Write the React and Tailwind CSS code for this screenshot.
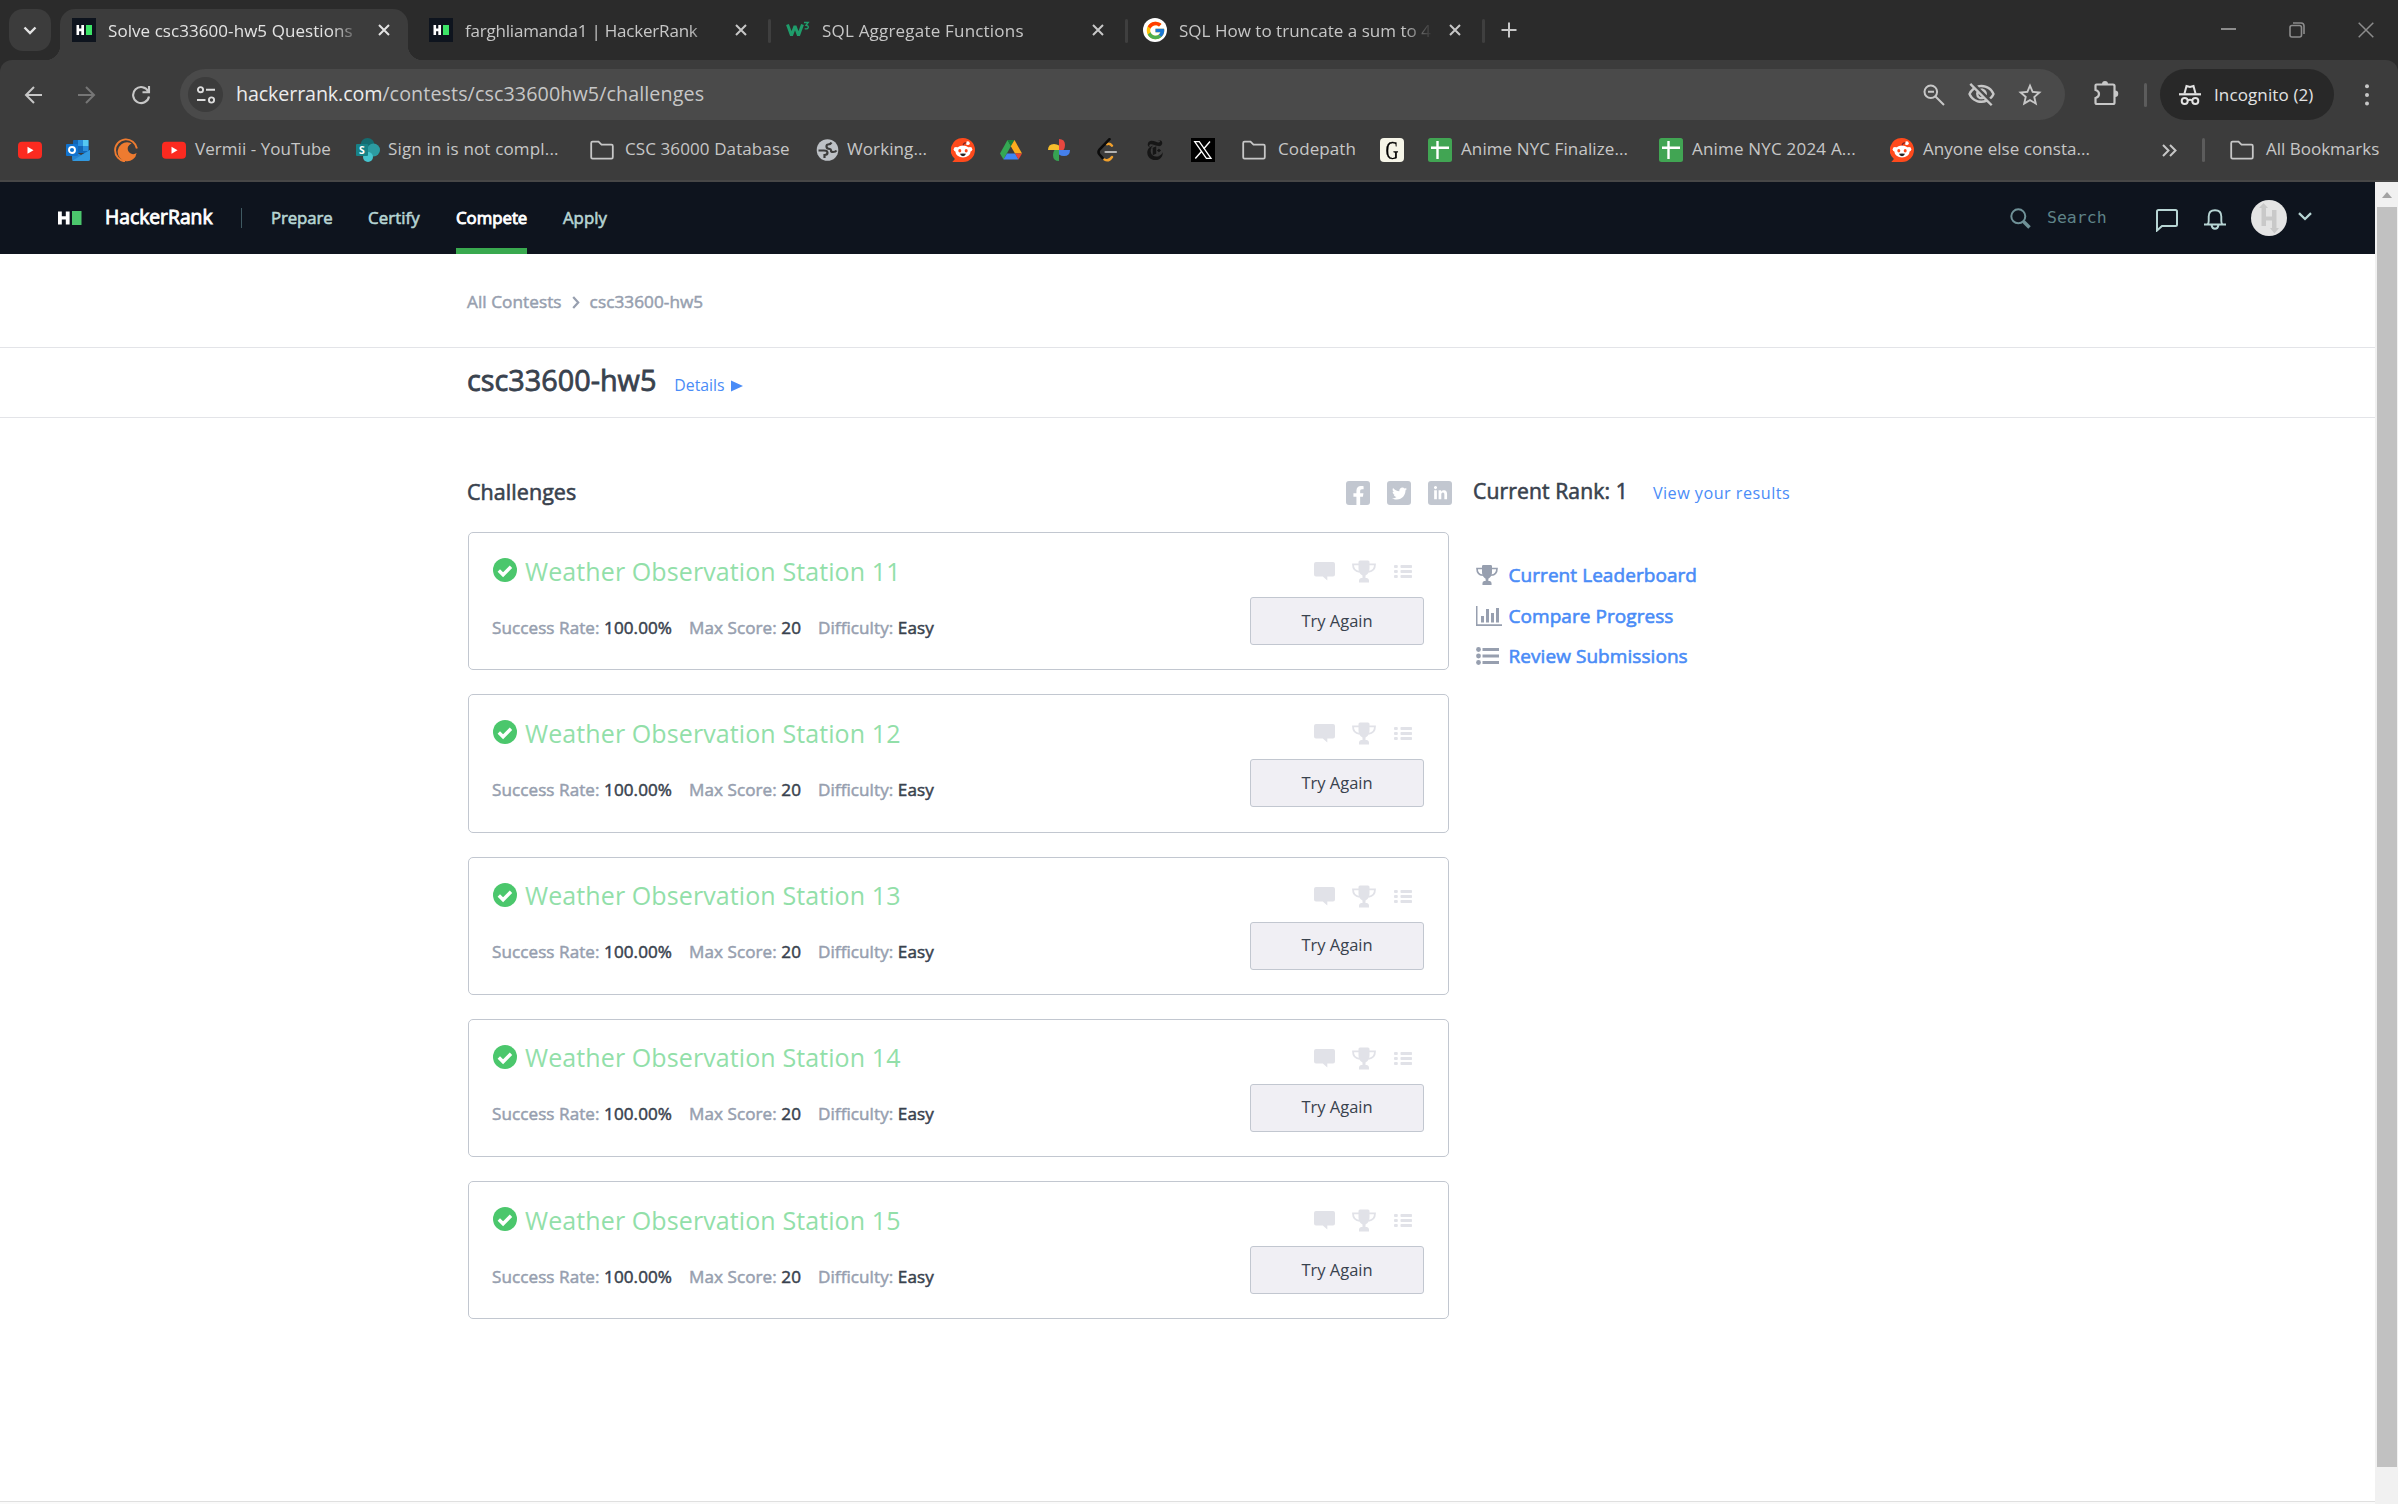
import { FcGoogle } from "react-icons/fc";
import { SiNewyorktimes } from "react-icons/si";
import { FaFacebookF, FaTwitter, FaLinkedinIn } from "react-icons/fa";
import { MdStarOutline, MdOutlineVisibilityOff } from "react-icons/md";

/* ---------- favicons and bookmark icons ---------- */

const HrFavicon = () => (
  <svg viewBox="0 0 24 24" className="size-6 shrink-0">
    <rect width="24" height="24" fill="#0e141e" />
    <path d="M4.500 7h2.600v3.600h2.200V7H12v10H9.300v-3.700H7.100V17H4.500z" fill="#fff" />
    <rect x="14" y="7" width="6" height="10" fill="#3ce467" />
  </svg>
);

const W3Favicon = () => (
  <svg viewBox="0 0 24 24" className="size-6 shrink-0">
    <path d="M1.500 6.500l4 11 3.500-9.500L12.500 17.500l4-11" fill="none" stroke="#1f9d6b" strokeWidth="3" strokeLinejoin="bevel" />
    <path d="M18 4.500h4.300l-2.300 2.800q2.600.2 2.300 2.200-.6 1.900-3.600 1.200" fill="none" stroke="#1f9d6b" strokeWidth="1.300" />
  </svg>
);

const GoogleFavicon = () => (
  <span className="flex size-6 shrink-0 items-center justify-center rounded-full bg-white">
    <FcGoogle size={21} />
  </span>
);

const Youtube = () => (
  <svg viewBox="0 0 24 24" className="size-6 shrink-0">
    <rect y="3.700" width="24" height="17" rx="4" fill="#fb2a20" />
    <path d="M9.500 8.700v7l6-3.500z" fill="#fff" />
  </svg>
);

const Outlook = () => (
  <svg viewBox="0 0 24 24" className="size-6 shrink-0">
    <rect x="7" y="2" width="15.500" height="13" rx="1" fill="#1266b5" />
    <rect x="12" y="2" width="5" height="6" fill="#2a8fdd" />
    <rect x="17" y="2" width="5.500" height="6" fill="#55c8f2" />
    <rect x="17" y="8" width="5.500" height="5" fill="#2a8fdd" />
    <path d="M6 12l9 5 9-5v9q0 2-2 2H8q-2 0-2-2z" fill="#2483cf" />
    <path d="M6 23l18-11v9q0 2-2 2z" fill="#3299e0" />
    <rect y="6" width="12" height="12" rx="1" fill="#1173cf" />
    <circle cx="6" cy="12" r="3" fill="none" stroke="#fff" strokeWidth="1.900" />
  </svg>
);

const Crunchyroll = () => (
  <svg viewBox="0 0 24 24" className="size-6 shrink-0">
    <path d="M22.900 10.500A11 11 0 1 0 11 23.300" fill="none" stroke="#ee7b30" strokeWidth="1.900" />
    <path d="M14.500 4.400A9.500 9.500 0 1 0 22.600 15a5.500 5.500 0 1 1-5-9.600 9 9 0 0 0-3.100-1z" fill="#ee7b30" />
  </svg>
);

const Sharepoint = () => (
  <svg viewBox="0 0 24 24" className="size-6 shrink-0">
    <circle cx="11.500" cy="7" r="7" fill="#156c70" />
    <circle cx="17.500" cy="12" r="6.500" fill="#2c9ba1" />
    <circle cx="12" cy="19" r="5" fill="#45c4ce" />
    <rect y="6" width="12" height="12" rx="1" fill="#178287" />
    <text x="6" y="15.800" textAnchor="middle" fontSize="10.500" fontWeight="700" fill="#fff" fontFamily="Open Sans, sans-serif">S</text>
  </svg>
);

const Folder = () => (
  <svg viewBox="0 0 24 24" className="size-6 shrink-0">
    <path d="M2.500 3.700h6l3 3h10q1.300 0 1.300 1.300v11.300q0 1.300-1.300 1.300h-19q-1.300 0-1.300-1.300V5q0-1.300 1.300-1.300z" fill="none" stroke="#c7c7c7" strokeWidth="1.800" />
  </svg>
);

const Globe = () => (
  <svg viewBox="0 0 24 24" className="size-6 shrink-0">
    <circle cx="11.500" cy="12" r="10.800" fill="#bdc1c6" />
    <path d="M2.500 12.500H8q3.500 0 3.500 2.300 0 2.200-3 2.200v3M15.500 4.500q-1 2-3.500 2-1.500 0-1.500 2 0 2.500 3.500 2.500 1 0 1 1.500 0 1.500 2 1.500 2.500 0 3.500-1.500" fill="none" stroke="#3c3c3c" strokeWidth="2.200" />
  </svg>
);

const Reddit = () => (
  <svg viewBox="0 0 24 24" className="size-6 shrink-0">
    <path d="M12 0a12 12 0 1 1 0 24H1.300l2.600-3A12 12 0 0 1 12 0z" fill="#ff4a1c" />
    <circle cx="16.800" cy="5.200" r="1.900" fill="#fff" />
    <path d="M12 8.500c0-3 1.500-4 3.500-3.500" fill="none" stroke="#842123" strokeWidth="1.200" />
    <circle cx="5" cy="11.300" r="2.300" fill="#fff" />
    <circle cx="19" cy="11.300" r="2.300" fill="#fff" />
    <ellipse cx="12" cy="13.500" rx="7.600" ry="6" fill="#fff" />
    <ellipse cx="8.800" cy="12.700" rx="1.500" ry="1.800" fill="#ff4a1c" />
    <ellipse cx="15.200" cy="12.700" rx="1.500" ry="1.800" fill="#ff4a1c" />
    <path d="M9 15.800q3-.6 6 0-.7 2.400-3 2.400t-3-2.400z" fill="#222" />
  </svg>
);

const Drive = () => (
  <svg viewBox="0 0 24 24" className="size-6 shrink-0">
    <path d="M8.500 2L1 15.500 4.500 21.500 12 8z" fill="#34a853" />
    <path d="M8.500 2h7L12 8.200z" fill="#188038" />
    <path d="M15.500 2L23 15.500h-7L11.800 8.200z" fill="#fbad1e" />
    <path d="M8 15.500h8.200l3.300 6h-15z" fill="#4285f4" />
    <path d="M16 15.500h7l-3.500 6z" fill="#ea4335" />
  </svg>
);

const Photos = () => (
  <svg viewBox="0 0 24 24" className="size-6 shrink-0">
    <path d="M12 1q6 0 6 6 0 3-1.500 5H12z" fill="#e8473f" />
    <path d="M1 12q0-6 6-6 3 0 5 1.500V12z" fill="#f6bd2c" />
    <path d="M12 12h11q0 6-6 6-3 0-5-1.500z" fill="#4580ec" />
    <path d="M12 12v11q-6 0-6-6 0-3 1.500-5z" fill="#37a352" />
  </svg>
);

const Leetcode = () => (
  <svg viewBox="0 0 24 24" className="size-6 shrink-0" fill="none" strokeLinecap="round">
    <path d="M12 6.200q2.500-1.500 5 1.500M9.500 21.500q4 2.500 7.500-2.500" stroke="#f0a02c" strokeWidth="2.400" />
    <path d="M14.500 1.200L4.500 11.500q-2 2.500 0 5l3 3.300" stroke="#0b0b0b" strokeWidth="2.600" />
    <path d="M10.500 14h10.500" stroke="#b3b3b3" strokeWidth="2.200" />
  </svg>
);

const Nyt = () => (
  <span className="flex size-6 shrink-0 items-center justify-center">
    <SiNewyorktimes size={20} color="#161616" />
  </span>
);

const XLogo = () => (
  <svg viewBox="0 0 24 24" className="size-6 shrink-0">
    <rect width="24" height="24" fill="#000" />
    <path d="M3.700 3.700h4.600l11.700 16.600h-4.600z" fill="none" stroke="#fff" strokeWidth="1.300" />
    <path d="M19 3.500l-6.200 7.200M10.700 13.200L4.300 20.500" stroke="#fff" strokeWidth="1.400" />
  </svg>
);

const GSerif = () => (
  <span className="flex size-6 shrink-0 items-center justify-center rounded-sm bg-[#f6f5e8] font-['Liberation_Serif',serif] text-[25px] leading-none text-black">
    <span className="scale-x-[0.72] [-webkit-text-stroke:0.3px]">G</span>
  </span>
);

const Sheets = () => (
  <svg viewBox="0 0 24 24" className="size-6 shrink-0">
    <rect width="24" height="24" rx="2.500" fill="#41a553" />
    <path d="M9.500 3v18M3 9.800h18" stroke="#fff" strokeWidth="2.400" />
  </svg>
);

/* ---------- browser chrome ---------- */

const Close = ({ color = "#c7c7c7" }) => (
  <svg viewBox="0 0 12 12" className="size-3 shrink-0">
    <path d="M1 1l10 10M11 1L1 11" stroke={color} strokeWidth="2" />
  </svg>
);

const tabs = [
  { icon: HrFavicon, title: "Solve csc33600-hw5 Questions", active: true, spacing: "tracking-[0.06px]" },
  { icon: HrFavicon, title: "farghliamanda1 | HackerRank", spacing: "tracking-[-0.2px]" },
  { icon: W3Favicon, title: "SQL Aggregate Functions", spacing: "tracking-[0.2px]" },
  { icon: GoogleFavicon, title: "SQL How to truncate a sum to 4", spacing: "tracking-[0.02px]" },
];

function Tab({ icon: Icon, title, active, spacing }) {
  return (
    <div className="flex h-[60px] w-[357px] shrink-0 pt-[9px]">
      <div className={active ? "relative flex h-[51px] w-[348px] rounded-t-[15px] bg-[#3c3c3c]" : "relative flex h-[51px] w-[348px]"}>
        {active && (
          <>
            <span className="absolute -left-[15px] bottom-0 size-[15px] bg-[radial-gradient(circle_at_0_0,transparent_15px,#3c3c3c_15.500px)]" />
            <span className="absolute -right-[15px] bottom-0 size-[15px] bg-[radial-gradient(circle_at_100%_0,transparent_15px,#3c3c3c_15.500px)]" />
          </>
        )}
        <div className="flex h-[42px] items-center pl-3">
          <Icon />
          <span
            className={`ml-3 w-[254px] whitespace-nowrap pt-0.5 text-[17px] leading-6 [mask-image:linear-gradient(to_right,#000_88%,transparent)] ${spacing} ${active ? "text-[#e3e3e3]" : "text-[#c7c7c7]"}`}
          >
            {title}
          </span>
          <span className="ml-4">
            <Close color={active ? "#e3e3e3" : "#c7c7c7"} />
          </span>
        </div>
      </div>
      <div className={active ? "w-[9px]" : "mt-[10px] ml-[3px] h-6 w-[3px] rounded bg-[#3f3f3f]"} />
    </div>
  );
}

function TabStrip() {
  return (
    <div className="flex h-[60px] bg-[#2b2b2b]">
      <div className="mt-[9px] ml-[9px] mr-[9px] flex size-[42px] items-center justify-center rounded-[14px] bg-[#3c3c3c]">
        <svg viewBox="0 0 14 9" className="h-[9px] w-[14px]">
          <path d="M1.500 1.500L7 7l5.500-5.500" fill="none" stroke="#e3e3e3" strokeWidth="2.400" />
        </svg>
      </div>
      {tabs.map((t) => (
        <Tab key={t.title} {...t} />
      ))}
      <svg viewBox="0 0 16 16" className="mt-[22px] ml-[13px] size-4">
        <path d="M8 .5v15M.5 8h15" stroke="#c7c7c7" strokeWidth="2" />
      </svg>
      <div className="ml-auto flex h-[60px] items-center gap-[53px] pr-[24px]">
        <span className="mb-0.5 h-0.5 w-[15px] bg-[#8c8c8c]" />
        <svg viewBox="0 0 16 16" className="size-4" fill="none" stroke="#8c8c8c" strokeWidth="1.600">
          <rect x="1" y="3.500" width="11.500" height="11.500" rx="2" />
          <path d="M4 1h8q3 0 3 3v8" />
        </svg>
        <svg viewBox="0 0 16 16" className="size-4">
          <path d="M.7.7l14.600 14.600M15.300.7L.7 15.300" stroke="#8c8c8c" strokeWidth="1.500" />
        </svg>
      </div>
    </div>
  );
}

function Toolbar() {
  return (
    <div className="bg-[#2b2b2b]">
      <div className="flex h-[69px] rounded-t-[12px] bg-[#3c3c3c]">
        <div className="flex h-[69px] w-[180px] items-center pl-6">
          <svg viewBox="0 0 18 18" className="size-[18px]" fill="none" stroke="#c7c7c7" strokeWidth="2">
            <path d="M18 9H2M10 1L2 9l8 8" />
          </svg>
          <svg viewBox="0 0 18 18" className="ml-9 size-[18px]" fill="none" stroke="#767676" strokeWidth="2">
            <path d="M0 9h16M8 1l8 8-8 8" />
          </svg>
          <svg viewBox="0 0 20 20" className="ml-[35px] size-5" fill="none" stroke="#c7c7c7" strokeWidth="2.100">
            <path d="M17.300 6.500A8 8 0 1 0 18 11.500" />
            <path d="M18 1v6.200h-6.500" />
          </svg>
        </div>
        <div className="mt-[9px] flex h-[51px] w-[1885px] items-center rounded-full bg-[#4a4a4a] pl-2">
          <span className="flex size-[35px] items-center justify-center rounded-full bg-[#3c3c3c]">
            <svg viewBox="0 0 18 18" className="size-[18px]" fill="none" stroke="#dcdcdc" strokeWidth="1.900">
              <circle cx="3.500" cy="3.700" r="2.600" />
              <path d="M9 3.700h9M0 14h8.500" />
              <circle cx="14.500" cy="14" r="2.600" />
            </svg>
          </span>
          <span className="ml-[13px] whitespace-nowrap pb-px text-[19.7px] leading-7 text-[#c7c7c7]">
            <span className="tracking-[-0.12px] text-[#ececec]">hackerrank.com</span>
            <span className="tracking-[0.1px]">/contests/csc33600hw5/challenges</span>
          </span>
          <div className="ml-auto flex items-center pr-[21px]">
            <svg viewBox="0 0 22 22" className="size-[22px]" fill="none" stroke="#c7c7c7" strokeWidth="2">
              <circle cx="7.800" cy="7.800" r="6.300" />
              <path d="M12.500 12.500l8.500 8.500M5 7.800h6" />
            </svg>
            <MdOutlineVisibilityOff size={29} color="#c7c7c7" className="ml-[22px]" />
            <MdStarOutline size={28} color="#c7c7c7" className="ml-5" />
          </div>
        </div>
        <div className="flex h-[69px] flex-1 items-center">
          <svg viewBox="0 0 26 26" className="mb-1 ml-[28px] size-[26px]">
            <path d="M2.500 5.500q0-1 1-1H20q1.500 0 1.500 1.500v16.500q0 1.500-1.500 1.500H4q-1.500 0-1.500-1.500v-4.500q3.500-1 3.500-4t-3.500-4z" fill="none" stroke="#c7c7c7" strokeWidth="2.200" />
            <path d="M9 4a3 3 0 0 1 6 0zM22 10.500a3.200 3.200 0 0 1 0 6.500z" fill="#c7c7c7" />
          </svg>
          <span className="ml-[25px] h-6 w-[3px] rounded bg-[#5c5c5c]" />
          <div className="ml-[13px] flex h-[51px] w-[174px] items-center rounded-full bg-[#282828] pl-[19px]">
            <svg viewBox="0 0 22 22" className="size-[22px]" fill="none" stroke="#e3e3e3" strokeWidth="2">
              <path d="M5.500 9.500L7.500 2l3.500 1 3.500-1 2 7.500" />
              <path d="M0 10.300h22" strokeWidth="2.200" />
              <circle cx="5.700" cy="17" r="3" />
              <circle cx="16.300" cy="17" r="3" />
              <path d="M8.500 16.500q2.500-1.500 5 0" />
            </svg>
            <span className="ml-[13px] whitespace-nowrap text-[17px] tracking-[0.12px] text-[#e3e3e3]">Incognito (2)</span>
          </div>
          <svg viewBox="0 0 4 22" className="ml-[31px] h-[22px] w-1" fill="#c7c7c7">
            <circle cx="2" cy="2.300" r="2" />
            <circle cx="2" cy="11" r="2" />
            <circle cx="2" cy="19.500" r="2" />
          </svg>
        </div>
      </div>
    </div>
  );
}

const bookmarks = [
  { icon: Youtube, box: "w-12" },
  { icon: Outlook, box: "w-12" },
  { icon: Crunchyroll, box: "w-12" },
  { icon: Youtube, box: "w-[194px]", label: "Vermii - YouTube", spacing: "ml-[9px] tracking-[0.05px]" },
  { icon: Sharepoint, box: "w-[234px]", label: "Sign in is not compl...", spacing: "ml-[8px] tracking-[0.16px]" },
  { icon: Folder, box: "w-[226px]", label: "CSC 36000 Database", spacing: "ml-[11px] tracking-[0.1px]" },
  { icon: Globe, box: "w-[135px]", label: "Working...", spacing: "ml-[7px] tracking-[0.1px]" },
  { icon: Reddit, box: "w-12" },
  { icon: Drive, box: "w-12" },
  { icon: Photos, box: "w-12" },
  { icon: Leetcode, box: "w-12" },
  { icon: Nyt, box: "w-12" },
  { icon: XLogo, box: "w-[51px]" },
  { icon: Folder, box: "w-[138px]", label: "Codepath", spacing: "ml-[12px] tracking-[0.1px]" },
  { icon: GSerif, box: "w-12" },
  { icon: Sheets, box: "w-[231px]", label: "Anime NYC Finalize...", spacing: "ml-[9px] tracking-[0.1px]" },
  { icon: Sheets, box: "w-[231px]", label: "Anime NYC 2024 A...", spacing: "ml-[9px] tracking-[0.2px]" },
  { icon: Reddit, box: "w-[272px]", label: "Anyone else consta...", spacing: "ml-[9px] tracking-[0.05px]" },
];

function BookmarkBar() {
  return (
    <div className="flex h-[53px] items-center border-b-2 border-[#474747] bg-[#3c3c3c] pb-[9px] pl-[18px] text-[17px] text-[#c7c7c7]">
      {bookmarks.map(({ icon: Icon, box, label, spacing }, i) => (
        <div key={i} className={`flex shrink-0 items-center ${box}`}>
          <Icon />
          {label && <span className={`whitespace-nowrap pb-0.5 leading-6 ${spacing}`}>{label}</span>}
        </div>
      ))}
      <svg viewBox="0 0 15 13" className="h-[13px] w-[15px]" fill="none" stroke="#c7c7c7" strokeWidth="2">
        <path d="M1 1l5.500 5.500L1 12M8 1l5.500 5.500L8 12" />
      </svg>
      <span className="mr-[25px] ml-[25px] h-6 w-[3px] rounded bg-[#5c5c5c]" />
      <Folder />
      <span className="ml-3 whitespace-nowrap pb-0.5 leading-6">All Bookmarks</span>
    </div>
  );
}

/* ---------- HackerRank page ---------- */

const Trophy = ({ className }) => (
  <svg viewBox="0 0 24 22" className={className}>
    <path d="M6.500 1.500Q6.500 0 8 0h8q1.500 0 1.500 1.500V8q0 5-4 7v2.500h1.500q2 .500 2 2.500v2H7v-2q0-2 2-2.500h1.500V15q-4-2-4-7z" fill="currentColor" />
    <path d="M7 3.800H1c0 4 2 7 6.500 7.500M17 3.800h6c0 4-2 7-6.500 7.500" fill="none" stroke="currentColor" strokeWidth="1.800" />
  </svg>
);

const Comment = () => (
  <svg viewBox="0 0 21 19" className="h-[19px] w-[21px] text-[#e1e2e8]">
    <path d="M2 0h17q2 0 2 2v10.500q0 2-2 2h-5.700V18.500l-4.500-4H2q-2 0-2-2V2q0-2 2-2z" fill="currentColor" />
  </svg>
);

const SmallList = () => (
  <svg viewBox="0 0 18 13" className="h-[13px] w-[18px]" fill="#e1e2e8">
    <rect width="3.800" height="3" rx="1" />
    <rect y="5" width="3.800" height="3" rx="1" />
    <rect y="10" width="3.800" height="3" rx="1" />
    <rect x="6.500" width="11.500" height="3" rx=".7" />
    <rect x="6.500" y="5" width="11.500" height="3" rx=".7" />
    <rect x="6.500" y="10" width="11.500" height="3" rx=".7" />
  </svg>
);

const BarChart = () => (
  <svg viewBox="0 0 26 20" className="h-5 w-[26px]" fill="#979faf">
    <path d="M0 0h1.500v18.300H26V20H0z" />
    <rect x="5" y="10" width="3" height="6.500" />
    <rect x="10" y="3" width="3" height="13.500" />
    <rect x="15" y="7" width="3" height="9.500" />
    <rect x="20" y="2" width="3" height="14.500" />
  </svg>
);

const BigList = () => (
  <svg viewBox="0 0 23 18" className="h-[18px] w-[23px]" fill="#979faf">
    <circle cx="2.500" cy="2.500" r="2.400" />
    <circle cx="2.500" cy="9" r="2.400" />
    <circle cx="2.500" cy="15.500" r="2.400" />
    <rect x="6.500" y="1" width="16.500" height="3" />
    <rect x="6.500" y="7.500" width="16.500" height="3" />
    <rect x="6.500" y="14" width="16.500" height="3" />
  </svg>
);

function SiteHeader() {
  return (
    <header className="flex h-[72px] items-stretch bg-[#0e141e] text-[16.8px] text-[#b7d5d4] [-webkit-text-stroke:0.6px]">
      <div className="flex w-[271px] items-center pl-[58px]">
        <svg viewBox="0 0 24 14" className="h-[14px] w-6">
          <path d="M0 .5h3.800v4.700h4V.5h3.800v13H7.800V8.600h-4v4.900H0z" fill="#fff" />
          <rect x="14" width="9.500" height="14" fill="#4bc76c" />
        </svg>
        <span className="ml-[23px] w-[108px] whitespace-nowrap pb-0.5 text-[19.300px] text-white [-webkit-text-stroke:0.9px]">HackerRank</span>
        <span className="ml-[28px] h-5 w-px bg-[#3f5a62]" />
      </div>
      <span className="flex w-[97px] items-center tracking-[-0.1px]">Prepare</span>
      <span className="flex w-[88px] items-center tracking-[0.1px]">Certify</span>
      <span className="flex w-[71px] items-center border-b-[6px] border-[#39a94f] pt-1.5 text-white [-webkit-text-stroke:0.9px]">Compete</span>
      <span className="ml-[36px] flex items-center">Apply</span>
      <div className="ml-auto flex items-center pr-[63px]">
        <svg viewBox="0 0 21 21" className="size-[21px]" fill="none" stroke="#6f9197">
          <circle cx="8.300" cy="8.300" r="7" strokeWidth="2" />
          <path d="M13.500 13.500l6 6" strokeWidth="3.600" />
        </svg>
        <span className="ml-4 w-[59px] pt-px font-['DejaVu_Sans_Mono',monospace] text-[16.500px] text-[#5f8388] [-webkit-text-stroke:0]">Search</span>
        <svg viewBox="0 0 22 23" className="mt-1 ml-[50px] h-[23px] w-[22px]" fill="none" stroke="#b7d5d4" strokeWidth="2">
          <path d="M2.500 1h17q1.500 0 1.500 1.500v13q0 1.500-1.500 1.500H6l-5 4.500V2.500Q1 1 2.500 1z" />
        </svg>
        <svg viewBox="0 0 22 21" className="mt-0.5 ml-[26px] h-[21px] w-[22px]" fill="none" stroke="#b7d5d4" strokeWidth="1.900">
          <path d="M0 15.500h22M3.500 15.500q1.200-1.200 1.200-3.500V7.500q0-6.300 6.300-6.300t6.300 6.300V12q0 2.300 1.200 3.500M7.500 16q.6 3.700 3.500 3.700t3.500-3.700" />
        </svg>
        <svg viewBox="0 0 36 36" className="ml-[25px] size-9">
          <circle cx="18" cy="18" r="18" fill="#e4e4e4" />
          <path d="M10.500 26V8H8l4.500-5L17 8h-2v8.500h6V10h4.500v18H28l-4.500 5.500L19 28h2v-7.500h-6V26z" fill="#c9c9c9" />
        </svg>
        <svg viewBox="0 0 14 9" className="mb-1 ml-[11px] h-[9px] w-[14px]">
          <path d="M1 1.200l6 5.800 6-5.800" fill="none" stroke="#b7d5d4" strokeWidth="2.300" />
        </svg>
      </div>
    </header>
  );
}

function Stat({ label, value }) {
  return (
    <span className="mr-[17px] text-[#979faf]">
      {label} <span className="text-[#39424e]">{value}</span>
    </span>
  );
}

function ChallengeCard({ number }) {
  return (
    <article className="flex h-[138.250px] w-[981px] justify-between rounded-[5px] border border-[#c2c7d0] px-6 pt-[25px]">
      <div>
        <h2 className="flex h-6 items-center">
          <svg viewBox="0 0 24 24" className="size-6">
            <circle cx="12" cy="12" r="12" fill="#4bc76c" />
            <path d="M5.800 12.500l4.300 4.300 7.900-8" fill="none" stroke="#fff" strokeWidth="3.400" />
          </svg>
          <span className="ml-2 whitespace-nowrap pt-px text-[25px] leading-8 tracking-[0.1px] text-[#92dfa9]">Weather Observation Station {number}</span>
        </h2>
        <p className="mt-[33.500px] -ml-px flex whitespace-nowrap text-[17.1px] leading-6 tracking-[0.06px] [-webkit-text-stroke:0.5px]">
          <Stat label="Success Rate:" value="100.00%" />
          <Stat label="Max Score:" value="20" />
          <Stat label="Difficulty:" value="Easy" />
        </p>
      </div>
      <div className="w-[174px]">
        <div className="flex h-[27px] items-center justify-end pr-3">
          <Comment />
          <Trophy className="ml-[17px] h-[23px] w-6 text-[#e1e2e8]" />
          <span className="ml-[18px]">
            <SmallList />
          </span>
        </div>
        <button className="mt-3 flex h-12 w-full items-center justify-center rounded-[3px] border border-[#c2c7d0] bg-[#f0eff4] text-[16.500px] text-[#39424e]">
          Try Again
        </button>
      </div>
    </article>
  );
}

function SideLink({ icon, children }) {
  return (
    <a className="flex h-[40.500px] items-center text-[19px] tracking-[0.06px] text-[#4a8cf7] [-webkit-text-stroke:0.6px]">
      <span className="flex w-[32.500px] justify-start">{icon}</span>
      {children}
    </a>
  );
}

const SocialTile = ({ children }) => (
  <span className="flex size-6 items-center justify-center overflow-hidden rounded-[3px] bg-[#c2c7d0] text-white">{children}</span>
);

function ContestPage() {
  return (
    <main className="flex flex-1 flex-col text-[#39424e]">
      <nav className="flex h-[94px] items-center border-b border-[#e3e4e8] pt-[3px] pl-[467px] text-[17.2px] tracking-[0.05px] text-[#979faf] [-webkit-text-stroke:0.5px]">
        All Contests
        <svg viewBox="0 0 8 13" className="mx-[10px] h-[13px] w-2">
          <path d="M1.200 1l5 5.500-5 5.500" fill="none" stroke="#979faf" strokeWidth="2.200" />
        </svg>
        csc33600-hw5
      </nav>
      <div className="flex h-[70px] items-baseline border-b border-[#e3e4e8] pt-3 pl-[467px]">
        <h1 className="text-[28.800px] leading-10 [-webkit-text-stroke:0.8px]">csc33600-hw5</h1>
        <a className="ml-[18px] flex items-center text-[15.8px] text-[#4a8cf7]">
          Details
          <svg viewBox="0 0 12 12" className="ml-[6px] size-3">
            <path d="M0 .5l12 5.500-12 5.500z" fill="#4a8cf7" />
          </svg>
        </a>
      </div>
      <div className="flex flex-1 pt-[63px] pl-[468px]">
        <section className="w-[984px]">
          <div className="flex h-6 items-center">
            <h3 className="-ml-px pb-[3px] text-[21.500px] leading-7 tracking-[0.05px] [-webkit-text-stroke:0.6px]">Challenges</h3>
            <div className="ml-auto flex gap-[17px]">
              <SocialTile><FaFacebookF size={19} className="mt-1" /></SocialTile>
              <SocialTile><FaTwitter size={15} /></SocialTile>
              <SocialTile><FaLinkedinIn size={15} /></SocialTile>
            </div>
          </div>
          <div className="mt-[27px] flex flex-col gap-6">
            {[11, 12, 13, 14, 15].map((n) => (
              <ChallengeCard key={n} number={n} />
            ))}
          </div>
        </section>
        <aside className="pl-[21px]">
          <div className="-mt-px flex h-[25px] items-baseline whitespace-nowrap">
            <h3 className="text-[21.100px] leading-[22px] tracking-[0.12px] [-webkit-text-stroke:0.6px]">Current Rank: 1</h3>
            <a className="ml-[25px] text-[16.2px] leading-[22px] tracking-[0.48px] text-[#4a8cf7]">View your results</a>
          </div>
          <div className="mt-[50px] pl-[3px]">
            <SideLink icon={<Trophy className="h-5 w-[22px] text-[#979faf]" />}>Current Leaderboard</SideLink>
            <SideLink icon={<BarChart />}>Compare Progress</SideLink>
            <SideLink icon={<BigList />}>Review Submissions</SideLink>
          </div>
        </aside>
      </div>
      <div className="h-[3px] border-t border-[#e0e0e0] bg-[#fafafa]" />
    </main>
  );
}

function Scrollbar() {
  return (
    <div className="flex w-[23px] flex-col items-center bg-[#f1f1f1]">
      <svg viewBox="0 0 10 6" className="mt-[10px] h-1.5 w-2.5">
        <path d="M5 0l5 6H0z" fill="#a3a3a3" />
      </svg>
      <div className="mt-[9px] h-[1260px] w-5 bg-[#c1c1c1]" />
    </div>
  );
}

export default function App() {
  return (
    <div className="flex h-[1504px] w-[2398px] flex-col overflow-hidden bg-white font-['Open_Sans',sans-serif]">
      <TabStrip />
      <Toolbar />
      <BookmarkBar />
      <div className="flex flex-1">
        <div className="flex flex-1 flex-col">
          <SiteHeader />
          <ContestPage />
        </div>
        <Scrollbar />
      </div>
    </div>
  );
}
